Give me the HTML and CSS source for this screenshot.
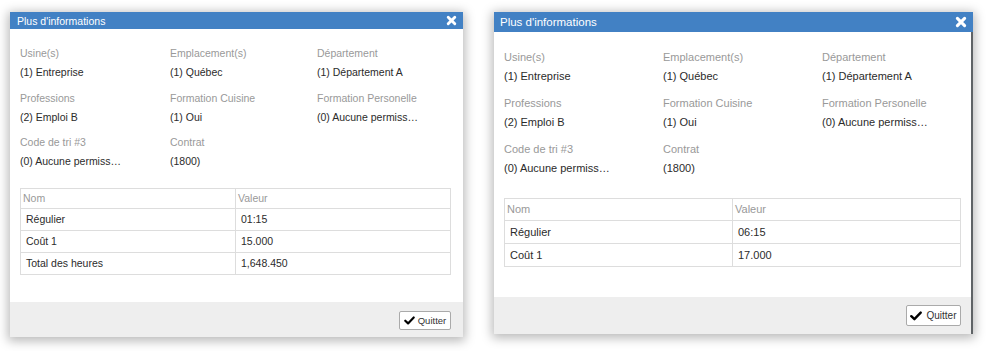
FILE: index.html
```html
<!DOCTYPE html>
<html lang="fr">
<head>
<meta charset="utf-8">
<title>Plus d'informations</title>
<link rel="stylesheet" href="styles.css">
</head>
<body>
<div class="stage">
  <section class="dialog dialog--a">
    <header class="dialog__head">
      <span class="dialog__title">Plus d'informations</span>
      <svg class="dialog__close" viewBox="0 0 10 10"><path d="M2 2 L8 8 M8 2 L2 8" stroke="#fff" stroke-width="2.6" stroke-linecap="round"/></svg>
    </header>
    <div class="dialog__body">
      <div class="fields">
        <div class="field"><div class="field__label">Usine(s)</div><div class="field__value">(1) Entreprise</div></div>
        <div class="field"><div class="field__label">Emplacement(s)</div><div class="field__value">(1) Québec</div></div>
        <div class="field"><div class="field__label">Département</div><div class="field__value">(1) Département A</div></div>
        <div class="field"><div class="field__label">Professions</div><div class="field__value">(2) Emploi B</div></div>
        <div class="field"><div class="field__label">Formation Cuisine</div><div class="field__value">(1) Oui</div></div>
        <div class="field"><div class="field__label">Formation Personelle</div><div class="field__value">(0) Aucune permiss…</div></div>
        <div class="field"><div class="field__label">Code de tri #3</div><div class="field__value">(0) Aucune permiss…</div></div>
        <div class="field"><div class="field__label">Contrat</div><div class="field__value">(1800)</div></div>
      </div>
      <table class="grid">
        <thead><tr><th>Nom</th><th>Valeur</th></tr></thead>
        <tbody>
          <tr><td>Régulier</td><td>01:15</td></tr>
          <tr><td>Coût 1</td><td>15.000</td></tr>
          <tr><td>Total des heures</td><td>1,648.450</td></tr>
        </tbody>
      </table>
    </div>
    <footer class="dialog__foot">
      <button class="btn" type="button"><svg class="btn__icon" viewBox="0 0 12 10"><path d="M1.3 5.2 L4.4 8.2 L10.7 1.6" fill="none" stroke="#000" stroke-width="2.4" stroke-linecap="round" stroke-linejoin="round"/></svg>Quitter</button>
    </footer>
  </section>

  <section class="dialog dialog--b">
    <header class="dialog__head">
      <span class="dialog__title">Plus d'informations</span>
      <svg class="dialog__close" viewBox="0 0 10 10"><path d="M2 2 L8 8 M8 2 L2 8" stroke="#fff" stroke-width="2.6" stroke-linecap="round"/></svg>
    </header>
    <div class="dialog__body">
      <div class="fields">
        <div class="field"><div class="field__label">Usine(s)</div><div class="field__value">(1) Entreprise</div></div>
        <div class="field"><div class="field__label">Emplacement(s)</div><div class="field__value">(1) Québec</div></div>
        <div class="field"><div class="field__label">Département</div><div class="field__value">(1) Département A</div></div>
        <div class="field"><div class="field__label">Professions</div><div class="field__value">(2) Emploi B</div></div>
        <div class="field"><div class="field__label">Formation Cuisine</div><div class="field__value">(1) Oui</div></div>
        <div class="field"><div class="field__label">Formation Personelle</div><div class="field__value">(0) Aucune permiss…</div></div>
        <div class="field"><div class="field__label">Code de tri #3</div><div class="field__value">(0) Aucune permiss…</div></div>
        <div class="field"><div class="field__label">Contrat</div><div class="field__value">(1800)</div></div>
      </div>
      <table class="grid">
        <thead><tr><th>Nom</th><th>Valeur</th></tr></thead>
        <tbody>
          <tr><td>Régulier</td><td>06:15</td></tr>
          <tr><td>Coût 1</td><td>17.000</td></tr>
        </tbody>
      </table>
    </div>
    <footer class="dialog__foot">
      <button class="btn" type="button"><svg class="btn__icon" viewBox="0 0 12 10"><path d="M1.3 5.2 L4.4 8.2 L10.7 1.6" fill="none" stroke="#000" stroke-width="2.4" stroke-linecap="round" stroke-linejoin="round"/></svg>Quitter</button>
    </footer>
  </section>
</div>
</body>
</html>
```
FILE: styles.css
```css
* { box-sizing: border-box; }

html, body {
  margin: 0;
  background: #fff;
}

body {
  min-height: 100vh;
  font-family: "Liberation Sans", Arial, sans-serif;
  color: #333;
}

.stage {
  display: flex;
  align-items: flex-start;
  gap: 31px;
  padding: 12px 0 14px 10px;
}

.dialog {
  display: flex;
  flex-direction: column;
  flex-shrink: 0;
  background: #fff;
  box-shadow: 0 2px 10px 2px rgba(0, 0, 0, 0.28);
}

.dialog__head {
  display: flex;
  align-items: center;
  justify-content: space-between;
  flex-shrink: 0;
  background: #4281c4;
  color: #fff;
}

.dialog__close {
  display: block;
}

.fields {
  display: grid;
}

.field__label {
  color: #999;
}

.field__value {
  color: #2b2b2b;
}

.grid {
  border-collapse: collapse;
  width: 100%;
  table-layout: fixed;
}

.grid th,
.grid td {
  border: 1px solid #ddd;
  text-align: left;
  font-weight: normal;
  padding-top: 0;
  padding-bottom: 0;
  white-space: nowrap;
}

.grid th {
  color: #999;
}

.grid td {
  color: #2b2b2b;
}

.dialog__foot {
  display: flex;
  justify-content: flex-end;
  align-items: flex-start;
  flex-shrink: 0;
  background: #eee;
}

.btn {
  display: flex;
  align-items: center;
  justify-content: center;
  background: #fff;
  border: 1px solid #aaa;
  border-radius: 2px;
  font-family: "Liberation Sans", Arial, sans-serif;
  color: #333;
  padding: 0;
}

/* ---------- smaller capture (left) ---------- */
.dialog--a {
  width: 453px;
  font-size: 10.5px;
}

.dialog--a .dialog__head {
  height: 17px;
  padding: 0 6px 0 7px;
}

.dialog--a .dialog__title {
  font-size: 10.5px;
}

.dialog--a .dialog__close {
  width: 11px;
  height: 11px;
}

.dialog--a .dialog__body {
  padding: 15px 12px 27px 10px;
}

.dialog--a .fields {
  grid-template-columns: 150px 147px 1fr;
  row-gap: 6.5px;
  margin-bottom: 17px;
}

.dialog--a .field__label,
.dialog--a .field__value {
  line-height: 19px;
}

.dialog--a .grid th {
  line-height: 19px;
  padding-left: 2px;
}

.dialog--a .grid td {
  line-height: 21px;
  padding-left: 5px;
}

.dialog--a .dialog__foot {
  height: 35px;
  padding: 9px 12px 0 0;
}

.dialog--a .btn {
  width: 52px;
  height: 19px;
  font-size: 9.5px;
  gap: 3px;
}

.dialog--a .btn__icon {
  width: 11px;
  height: 9px;
}

/* ---------- larger capture (right) ---------- */
.dialog--b {
  width: 479px;
  font-size: 11px;
  border-right: 2px solid #5f6366;
}

.dialog--b .dialog__head {
  height: 20px;
  padding: 0 6px 0 6px;
  margin-right: -2px;
}

.dialog--b .dialog__title {
  font-size: 11.5px;
}

.dialog--b .dialog__close {
  width: 12px;
  height: 12px;
}

.dialog--b .dialog__body {
  padding: 16px 10px 30px 10px;
}

.dialog--b .fields {
  grid-template-columns: 159px 159px 1fr;
  row-gap: 8px;
  margin-bottom: 20px;
}

.dialog--b .field__label,
.dialog--b .field__value {
  line-height: 19px;
}

.dialog--b .grid th {
  line-height: 21px;
  padding-left: 2px;
}

.dialog--b .grid td {
  line-height: 22px;
  padding-left: 5px;
}

.dialog--b .dialog__foot {
  height: 37px;
  padding: 8px 10px 0 0;
}

.dialog--b .btn {
  width: 55px;
  height: 21px;
  font-size: 10px;
  gap: 4px;
}

.dialog--b .btn__icon {
  width: 12px;
  height: 10px;
}
```
